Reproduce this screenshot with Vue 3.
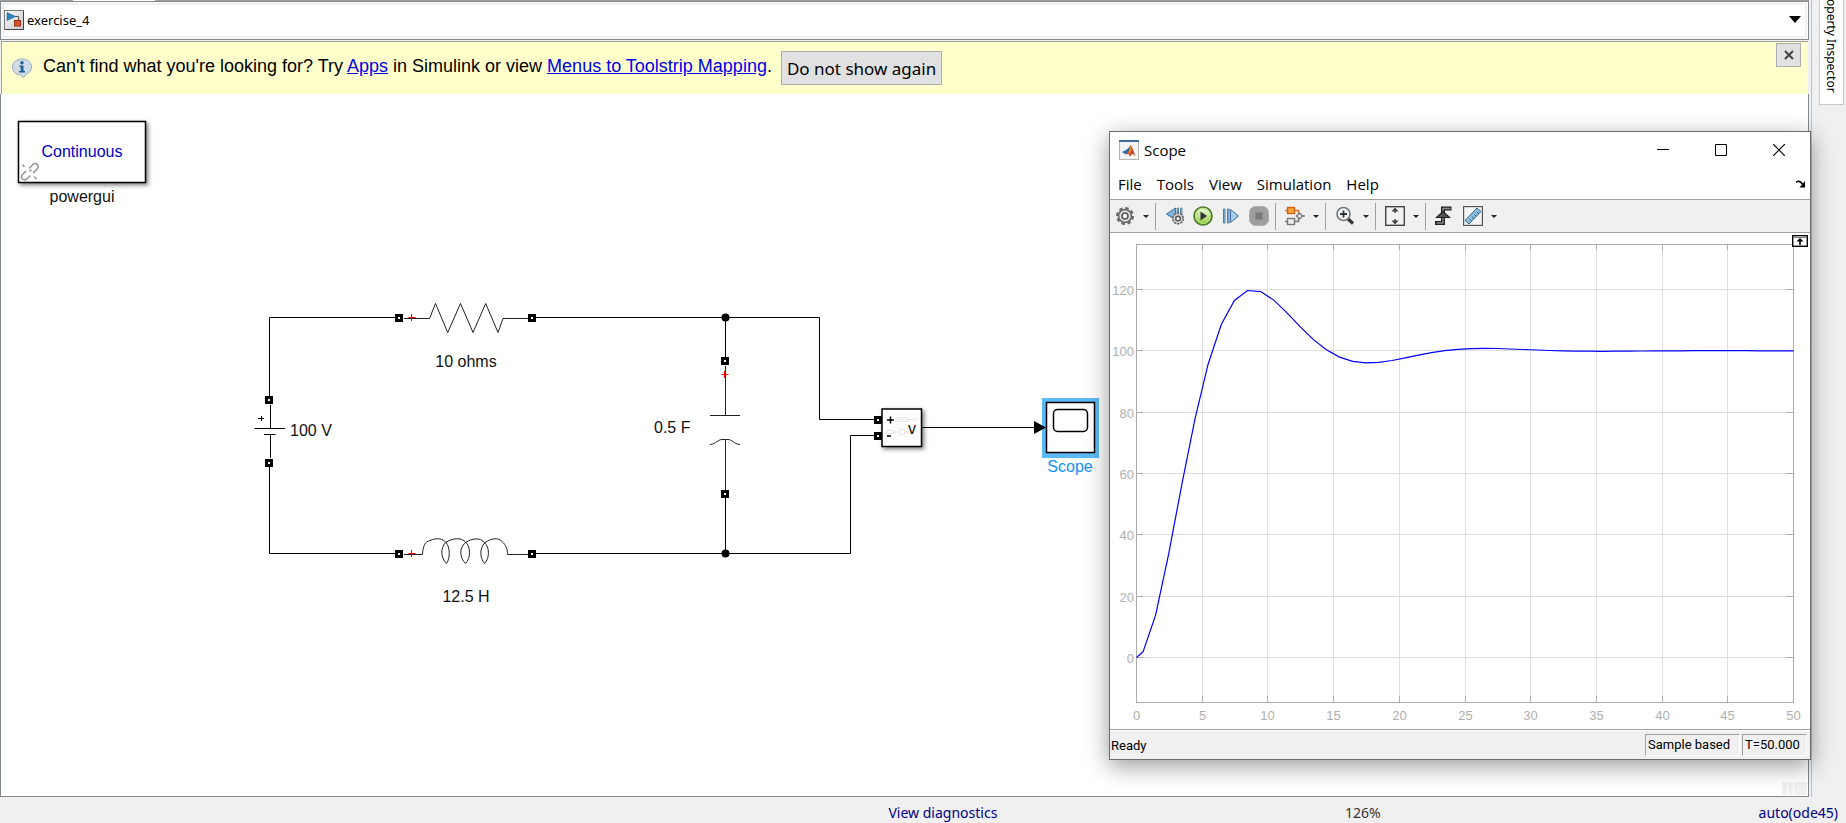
<script setup>
const menus = ['File', 'Tools', 'View', 'Simulation', 'Help']

const ports = [
  [399, 318], [532, 318], [399, 554], [532, 554],
  [269, 400], [269, 463], [725, 361], [725, 494],
  [878, 420], [878, 436]
]

const plot = { left: 26, right: 683, top: 11, bottom: 469, zero: 424, unitX: 13.14, unitY: 3.067 }
const px = (t) => plot.left + 0.5 + t * plot.unitX
const py = (v) => plot.zero + 0.5 - v * plot.unitY

const xTicks = Array.from({ length: 11 }, (_, i) => i * 5).map((t) => ({
  label: t,
  x: Math.floor(px(t)) + 0.5
}))
const yTicks = [0, 20, 40, 60, 80, 100, 120].map((v) => ({
  label: v,
  y: Math.floor(py(v)) + 0.5
}))

// Step response of a second-order circuit driven by a 100 V source.
const alpha = 0.183
const omega = 0.356
const response = (t) =>
  100 * (1 - Math.exp(-alpha * t) * (Math.cos(omega * t) + (alpha / omega) * Math.sin(omega * t)))
const times = [0, 0.5]
for (let t = 1.45; t < 50; t += 1) times.push(t)
times.push(50)
const curve = times.map((t) => `${px(t).toFixed(1)},${py(response(t)).toFixed(1)}`).join(' ')
</script>

<template>
  <div class="app">
    <div class="workspace">
      <main class="editor">
        <div class="strip"><span class="strip-tab"></span></div>
        <div class="address">
          <svg class="model-icon" width="20" height="20" viewBox="0 0 20 20" aria-hidden="true">
            <defs>
              <linearGradient id="modelBg" x1="0" y1="0" x2="1" y2="1">
                <stop offset="0" stop-color="#fff" /><stop offset="1" stop-color="#c4c4c4" />
              </linearGradient>
            </defs>
            <rect x=".5" y=".5" width="19" height="19" fill="url(#modelBg)" stroke="#777" />
            <path d="M19.5 1v18.5H1" fill="none" stroke="#444" />
            <path d="M3 2.500l8.500 4-8.500 4z" fill="#2f86bd" stroke="#1d5f8c" stroke-width=".6" />
            <path d="M11 6.500h3.500v4" fill="none" stroke="#555" />
            <rect x="10.500" y="10.500" width="6" height="5.500" fill="#d9532c" stroke="#9c2c12" />
          </svg>
          <span class="path">exercise_4</span>
          <button class="path-menu" aria-label="Show model path">
            <svg width="12" height="7" viewBox="0 0 12 7"><path d="M0 0h12L6 7z" fill="#000" /></svg>
          </button>
        </div>
        <div class="banner">
          <svg class="info" width="22" height="20" viewBox="0 0 22 20" aria-hidden="true">
            <path d="M11 1c5.500 0 9.500 3.200 9.500 8 0 3.400-2 6-5 7.200L12.500 19.500 9.500 17C4.500 16.600 1.500 13.500 1.500 9 1.500 4.200 5.500 1 11 1z" fill="#cfdbe6" stroke="#9aabba" />
            <circle cx="11" cy="4.700" r="1.700" fill="#1f5f94" />
            <path d="M8.500 7.500h4v5.500h1.500v1.500H8v-1.500h1.700V9H8.500z" fill="#1f5f94" />
          </svg>
          <p>
            Can't find what you're looking for? Try <a href="#apps">Apps</a> in Simulink or view
            <a href="#mapping">Menus to Toolstrip Mapping</a>.
          </p>
          <button class="dismiss">Do not show again</button>
          <button class="banner-close" aria-label="Close message">
            <svg width="10" height="10" viewBox="0 0 10 10"><path d="M1 1l8 8M9 1L1 9" stroke="#444" stroke-width="2" /></svg>
          </button>
        </div>

        <div class="canvas">
          <svg class="circuit" width="1109" height="700" viewBox="1 94 1109 700" role="img" aria-label="Circuit model">
            <!-- powergui block -->
            <rect class="block shadow" x="18.500" y="121.500" width="127" height="61" />
            <text class="blue" x="82" y="157" text-anchor="middle">Continuous</text>
            <text x="82" y="202" text-anchor="middle">powergui</text>
            <g fill="none" stroke="#999" stroke-width="1.600">
              <path d="M29 168.500l4-4c1.800-1.300 3.300-1.300 4.300 0s1 3 0 4.300l-4.300 4.300" />
              <path d="M26 171l-3.500 3.500c-1.300 1.800-1.300 3.300 0 4.500s2.700 1.200 4.300 0l3.700-3.500" />
              <path d="M22.500 164.500l2 2.500M34 176.500l2.500 2.500M31.500 169.500l-2 2" />
            </g>

            <!-- wires -->
            <g class="wire">
              <path d="M269.500 400V317.500H399M269.500 463V553.500H399" />
              <path d="M532 317.500H819.500V419.500H878M532 553.500H850.500V435.500H878" />
              <path d="M725.500 317.500V361M725.500 494V553.500" />
              <path d="M922 427.500H1036" />
            </g>
            <circle cx="725.500" cy="317.500" r="4" />
            <circle cx="725.500" cy="553.500" r="4" />

            <!-- source -->
            <g class="wire">
              <path d="M270.500 405V428.500M254.500 428.500H285M264 434.500H275.500M270.500 434.500V458" />
              <path d="M258 418.500h6M261.500 416v5" />
            </g>
            <text x="290" y="436">100 V</text>

            <!-- resistor -->
            <path class="part" d="M404 318.500H429.500L435.500 303.500 447.700 332.500 460.500 303.500 473 332.500 485.700 303.500 498 332.500 503 318.500H528" />
            <text x="466" y="367" text-anchor="middle">10 ohms</text>

            <!-- inductor -->
            <path
              class="part"
              d="M404 554.500H422.500C423 546 425 541.500 430 540.500 437 537.500 443 538.500 446 542.500 450 547 450.500 558 446.500 563.500 441 558 440 549 445.500 542.500 452 538.500 461 536.500 466 542.500 470.500 547 471 558 465.500 563.500 460 558 458.500 549 465.500 542.500 472 538.500 480 537 484.500 542.500 489.500 547 490 558 484.500 563.500 480 558 479 549 485 542.500 491 538.500 498 537 502 541.500 506 545 507.500 549 507.500 554.500H528"
            />
            <text x="466" y="602" text-anchor="middle">12.5 H</text>

            <!-- capacitor -->
            <path class="part" d="M725.500 366V416M710 415.500H740M710 444.500C716 444 718 439.500 722 439.500H728C732 439.500 734 444 740 444.500M725.500 439.500V490" />
            <text x="654" y="433">0.5 F</text>

            <g stroke="#f00">
              <path d="M408.500 317.500h7M411.500 314v7M408.500 553.500h7M411.500 550v7M721.500 374.500h7M724.500 371v7" />
            </g>

            <!-- voltage measurement -->
            <rect class="block shadow" x="882" y="409" width="39.500" height="37.500" />
            <g fill="none" stroke="#e6e6e6">
              <path d="M895 419.500h13M908 419.500h6" />
              <rect x="896" y="417.500" width="12" height="4" />
              <circle cx="916" cy="419.500" r="1.500" />
              <path d="M886.500 430.500h7v3h-7zM893 432h6M899.500 429.500h5v5h-5zM905 432h10" />
            </g>
            <path class="sign" d="M887 420h7M890.500 416.500v7M887 436h4" />
            <text x="908" y="434">v</text>

            <!-- scope block -->
            <rect x="1042" y="398" width="57" height="60" fill="#5cbaf7" />
            <rect class="block" x="1046.500" y="402.500" width="48" height="50" />
            <path d="M1034 421l12 6.500-12 6.500z" />
            <rect x="1053.500" y="409.500" width="34" height="22" rx="4" fill="none" stroke="#000" stroke-width="1.500" />
            <text class="selected" x="1070" y="472" text-anchor="middle">Scope</text>

            <g v-for="([x, y], i) in ports" :key="i">
              <rect :x="x - 4" :y="y - 4" width="8" height="8" />
              <rect :x="x - 1" :y="y - 1" width="2" height="2" fill="#fff" />
            </g>
          </svg>
          <div class="grip"><i></i><i></i><i></i></div>
        </div>
      </main>
      <aside class="side">
        <button class="side-tab" aria-label="Property Inspector">operty Inspector</button>
      </aside>
    </div>

    <footer class="status">
      <a class="diagnostics" href="#diagnostics">View diagnostics</a>
      <span>126%</span>
      <a href="#solver">auto(ode45)</a>
    </footer>

    <section class="scope" aria-label="Scope window">
      <header class="title">
        <svg width="20" height="20" viewBox="0 0 20 20" aria-hidden="true">
          <rect x=".5" y=".5" width="19" height="19" fill="#f4f4f4" stroke="#b5b5b5" />
          <rect width="20" height="2" fill="#3c6e9e" />
          <path d="M3 12l4-2 3.500-3 1.500-2-1 6-4 3.500z" fill="#2d6fae" />
          <path d="M7 14l3-3.500 2-5.500 1.700 4 2.800 7-3.200-2.500-2.300 3-1.500-2.500z" fill="#c8401c" />
          <path d="M12 5l.5 5-1.800 4-1.200-1z" fill="#f0962c" />
        </svg>
        <h1>Scope</h1>
        <button aria-label="Minimize"><svg width="12" height="12" viewBox="0 0 12 12"><path d="M0 5.500h12" stroke="#000" /></svg></button>
        <button aria-label="Maximize"><svg width="12" height="12" viewBox="0 0 12 12"><path d="M.5.5h11v11H.5z" fill="none" stroke="#000" /></svg></button>
        <button aria-label="Close"><svg width="12" height="12" viewBox="0 0 12 12"><path d="M0 0l12 12M12 0L0 12" stroke="#000" stroke-width="1.200" /></svg></button>
      </header>

      <nav class="menu">
        <button v-for="m in menus" :key="m">{{ m }}</button>
        <button class="undock" aria-label="Dock window">
          <svg width="10" height="8" viewBox="0 0 10 8"><path d="M0 2.500C2 .5 4 1 6.500 4" fill="none" stroke="#000" stroke-width="1.600" /><path d="M9 1v6.500H3.500z" /></svg>
        </button>
      </nav>

      <div class="toolbar">
        <button class="tool" aria-label="Configuration properties">
          <svg width="20" height="20" viewBox="0 0 20 20">
            <circle cx="10" cy="10" r="8" fill="none" stroke="#666" stroke-width="2" stroke-dasharray="3.600 2.680" />
            <circle cx="10" cy="10" r="6.500" fill="#ddd" stroke="#666" stroke-width="1.600" />
            <circle cx="10" cy="10" r="3" fill="#f4f4f4" stroke="#555" stroke-width="1.600" />
          </svg>
        </button>
        <button class="caret" aria-label="Configuration menu"><i></i></button>
        <span class="sep"></span>
        <button class="tool" aria-label="Step back options">
          <svg width="20" height="20" viewBox="0 0 20 20">
            <path d="M1.500 8L10.500 2v12z" fill="#7fb3dc" stroke="#3f6f99" />
            <path d="M12 2h1.500v8H12zM15.500 2H17v8h-1.500z" fill="#7fb3dc" stroke="#4b7ca6" stroke-width=".8" />
            <circle cx="13" cy="12.500" r="5.300" fill="#ccc" stroke="#666" stroke-width="1.500" stroke-dasharray="2.400 .9" />
            <circle cx="13" cy="12.500" r="2.300" fill="#f0f0f0" stroke="#555" stroke-width="1.400" />
          </svg>
        </button>
        <button class="tool" aria-label="Run">
          <svg width="20" height="20" viewBox="0 0 20 20">
            <defs>
              <linearGradient id="runBg" x1="0" y1="0" x2="0" y2="1">
                <stop offset="0" stop-color="#f4fbe6" /><stop offset="1" stop-color="#8fcb3c" />
              </linearGradient>
            </defs>
            <circle cx="10" cy="10" r="9" fill="url(#runBg)" stroke="#4a7a25" stroke-width="1.600" />
            <circle cx="10" cy="10" r="7.500" fill="none" stroke="#b4dc6d" />
            <path d="M7.500 5.500l6.500 4.500-6.500 4.500z" fill="#333" />
          </svg>
        </button>
        <button class="tool" aria-label="Step forward">
          <svg width="20" height="20" viewBox="0 0 20 20">
            <path d="M2.500 3h1.500v14H2.500zM6.500 3H8v14H6.500z" fill="#9fc6e6" stroke="#4b7ca6" />
            <path d="M9.500 3.500L17.500 10l-8 6.500z" fill="#a9cdea" stroke="#3f6f99" />
          </svg>
        </button>
        <button class="tool" aria-label="Stop" disabled>
          <svg width="20" height="20" viewBox="0 0 20 20">
            <rect x=".5" y=".5" width="19" height="19" rx="6" fill="#9e9e9e" stroke="#adadad" />
            <rect x="6.500" y="6.500" width="7" height="7" fill="#787878" />
          </svg>
        </button>
        <span class="sep"></span>
        <button class="tool" aria-label="Signal selector">
          <svg width="20" height="20" viewBox="0 0 20 20">
            <path d="M0 4.500h13.500v4" fill="none" stroke="#d9752c" stroke-width="1.400" />
            <path d="M0 15.500h13.500v-3M17 10h3" fill="none" stroke="#777" stroke-width="1.400" />
            <rect x="2.500" y="1.500" width="7" height="6" fill="#f7a53c" stroke="#d2601a" stroke-width="1.400" />
            <rect x="2.500" y="12.500" width="7" height="6" fill="#eee" stroke="#777" stroke-width="1.400" />
            <path d="M14.500 7l3 3-3 3-3-3z" fill="#eee" stroke="#777" stroke-width="1.400" />
          </svg>
        </button>
        <button class="caret" aria-label="Signal menu"><i></i></button>
        <span class="sep"></span>
        <button class="tool" aria-label="Zoom in">
          <svg width="20" height="20" viewBox="0 0 20 20">
            <path d="M12.500 12.500l5.500 5" stroke="#333" stroke-width="3.200" />
            <circle cx="8.500" cy="8" r="6.500" fill="#eef3f6" stroke="#777" stroke-width="1.600" />
            <path d="M5 8h7M8.500 4.500v7" stroke="#333" stroke-width="1.800" />
          </svg>
        </button>
        <button class="caret" aria-label="Zoom menu"><i></i></button>
        <span class="sep"></span>
        <button class="tool" aria-label="Scale axes">
          <svg width="20" height="20" viewBox="0 0 20 20">
            <rect x=".7" y=".7" width="18.600" height="18.600" fill="#f2f2f2" stroke="#444" stroke-width="1.400" />
            <path d="M10 1.500l3.500 4h-7zM10 18.500l3.500-4h-7z" fill="#444" />
            <path d="M10 5v2M10 13v2" stroke="#444" stroke-width="1.500" />
          </svg>
        </button>
        <button class="caret" aria-label="Scale menu"><i></i></button>
        <span class="sep"></span>
        <button class="tool" aria-label="Triggers">
          <svg width="20" height="20" viewBox="0 0 20 20">
            <path d="M0 17h8V2.500h8.500" fill="none" stroke="#222" stroke-width="4" />
            <path d="M1.500 17H8V2.500h7.500" fill="none" stroke="#8a8a8a" stroke-width="1.400" />
            <path d="M8 5.500l6.500 6H1.500z" fill="#555" stroke="#222" stroke-width="1.200" />
          </svg>
        </button>
        <button class="tool" aria-label="Cursor measurements">
          <svg width="20" height="20" viewBox="0 0 20 20">
            <rect x=".6" y=".6" width="18.800" height="18.800" fill="#f6f6f6" stroke="#555" stroke-width="1.200" />
            <path d="M2 14.500L14 2l4 3.500L6 18z" fill="#8dbedf" stroke="#33698f" />
            <path d="M8.500 15l-1.800-1.600M11 12.500l-1.800-1.600M13.300 10l-1.800-1.600M15.600 7.500l-1.800-1.600" stroke="#24506f" />
          </svg>
        </button>
        <button class="caret" aria-label="Measurements menu"><i></i></button>
      </div>

      <div class="plot">
        <svg width="100%" viewBox="0 0 700 496" role="img" aria-label="Capacitor voltage over time">
          <g stroke="#dedede">
            <line v-for="t in xTicks" :key="t.label" :x1="t.x" :x2="t.x" y1="11" y2="469" />
            <line v-for="t in yTicks" :key="t.label" x1="26" x2="683" :y1="t.y" :y2="t.y" />
          </g>
          <g stroke="#ababab">
            <rect x="26.500" y="11.500" width="657" height="458" fill="none" />
            <path v-for="t in xTicks" :key="t.label" :d="`M${t.x} 11v6M${t.x} 469v-6`" />
            <path v-for="t in yTicks" :key="t.label" :d="`M26 ${t.y}h7M683 ${t.y}h-7`" />
          </g>
          <text v-for="t in xTicks" :key="t.label" :x="t.x" y="487" text-anchor="middle">{{ t.label }}</text>
          <text v-for="t in yTicks" :key="t.label" x="24" :y="t.y + 5" text-anchor="end">{{ t.label }}</text>
          <polyline :points="curve" fill="none" stroke="#00f" stroke-width="1.200" />
        </svg>
        <button class="expand" aria-label="Maximize axes">
          <svg width="16" height="12" viewBox="0 0 16 12">
            <rect x=".7" y=".7" width="14.600" height="10.600" fill="#fff" stroke="#000" stroke-width="1.400" />
            <path d="M1 2.500h14" stroke="#888" />
            <path d="M8 3l3.500 3.500h-7z" /><path d="M8 5.500V10" stroke="#000" stroke-width="1.600" />
          </svg>
        </button>
      </div>

      <footer class="scope-status">
        <span class="ready">Ready</span>
        <span class="cell">Sample based</span>
        <span class="cell time">T=50.000</span>
      </footer>
    </section>
  </div>
</template>

<style>
html, body { margin: 0; }
</style>

<style scoped>
* { box-sizing: border-box; }
.app {
  position: relative;
  display: flex;
  flex-direction: column;
  min-height: 100vh;
  overflow: hidden;
  background: #f0f0f0;
  color: #000;
  font-family: "Open Sans", "Noto Sans", sans-serif;
}
button {
  padding: 0;
  border: 0;
  background: none;
  color: inherit;
  font: inherit;
}
svg { display: block; }
.workspace { flex: 1; display: flex; }
.editor {
  flex: 1;
  min-width: 0;
  display: flex;
  flex-direction: column;
}
.strip { height: 1px; background: #a0a0a0; }
.strip-tab { display: block; width: 82px; height: 1px; margin-left: 73px; background: #fff; }
.address {
  display: flex;
  align-items: center;
  height: 39px;
  padding: 0 7px 2px 3px;
  background: #fff;
  border: 1px solid #828790;
  box-shadow: inset 0 0 0 1px #fff, inset 0 0 0 3px #f0f0f0;
}
.path { margin-left: 3px; font: 13px "Noto Sans", sans-serif; }
.path-menu { margin-left: auto; }
.banner {
  display: flex;
  align-items: center;
  height: 53px;
  margin: 1px 1px 0;
  padding-left: 9px;
  background: #ffffcc;
  border-top: 1px solid #a0a0a0;
  border-left: 1px solid #a0a0a0;
  font: 18px "Liberation Sans", Arial, sans-serif;
}
.banner p { margin: 0 0 0 10px; padding-bottom: 3px; }
.banner a { color: #0000ee; }
.dismiss {
  height: 34px;
  margin-left: 9px;
  padding: 0 5px;
  background: #e1e1e1;
  border: 1px solid #adadad;
  font: 17px "Noto Sans", sans-serif;
}
.banner-close {
  display: grid;
  place-items: center;
  align-self: flex-start;
  width: 25px;
  height: 24px;
  margin: 1px 7px 0 auto;
  background: #e1e1e1;
  border: 1px solid #adadad;
}
.canvas {
  flex: 1;
  position: relative;
  background: #fff;
  border: 1px solid #828790;
  border-top: 0;
}
.circuit text { font: 16px "Liberation Sans", Arial, sans-serif; fill: #111; }
.circuit .blue { fill: #0000c8; }
.circuit .selected { fill: #1090f5; }
.wire, .part { fill: none; stroke: #000; }
.part { stroke: #222; }
.sign { stroke: #000; stroke-width: 1.5px; fill: none; }
.block { fill: #fff; stroke: #000; stroke-width: 1.5px; }
.shadow { filter: drop-shadow(2px 2px 2px rgba(0, 0, 0, .5)); }
.grip {
  position: absolute;
  right: 1px;
  bottom: 1px;
  display: flex;
  gap: 1px;
}
.grip i { width: 5px; height: 13px; background: #f0f0f0; }
.grip i:last-child { width: 13px; }
.side {
  display: flex;
  flex: none;
  align-items: flex-start;
  justify-content: flex-end;
  width: 35px;
  margin-left: 2px;
  padding-right: 2px;
  border-left: 1px solid #c0c0c0;
}
.side-tab {
  display: flex;
  align-items: center;
  justify-content: flex-end;
  width: 25px;
  height: 105px;
  padding-bottom: 11px;
  background: #fff;
  border: 1px solid #c8c8c8;
  border-top: 0;
  writing-mode: vertical-rl;
  white-space: nowrap;
  font: 12px "Noto Sans", sans-serif;
}
.status {
  display: grid;
  grid-template-columns: 48% 25% 1fr auto;
  align-items: center;
  height: 26px;
  padding: 4px 8px 0 12px;
  font: 14px "Noto Sans", sans-serif;
  color: #333;
}
.status a { color: #00008b; text-decoration: none; }
.diagnostics { grid-column: 2; }

.scope {
  position: absolute;
  top: 131px;
  right: 35px;
  width: 702px;
  background: #fff;
  border: 1px solid #6b6b6b;
  box-shadow: 0 6px 22px rgba(0, 0, 0, .4);
}
.title { display: flex; align-items: center; height: 36px; padding: 0 2px 0 9px; }
.title h1 { flex: 1; margin: 0 0 0 5px; font-size: 15px; font-weight: 400; }
.title button { display: grid; place-items: center; width: 58px; height: 36px; }
.menu {
  display: flex;
  align-items: center;
  gap: 15px;
  height: 32px;
  padding: 0 4px 0 8px;
  border-bottom: 1px solid #a0a0a0;
  font-size: 15px;
}
.undock { margin-left: auto; }
.toolbar {
  display: flex;
  align-items: center;
  height: 33px;
  padding-left: 1px;
  background: #f0f0f0;
  border-bottom: 1px solid #a0a0a0;
}
.tool { display: grid; place-items: center; width: 28px; height: 28px; }
.caret { display: grid; place-items: center; width: 14px; height: 28px; }
.caret i { border: 3px solid transparent; border-top-color: #222; border-bottom: 0; }
.sep { width: 1px; height: 27px; margin: 0 5px 0 2px; background: #a0a0a0; }
.plot { position: relative; }
.plot text { font: 13px "Liberation Sans", Arial, sans-serif; fill: #afafaf; }
.expand { position: absolute; top: 2px; right: 2px; }
.scope-status {
  display: flex;
  align-items: center;
  height: 30px;
  padding: 1px 3px 0 1px;
  gap: 2px;
  background: #f0f0f0;
  border-top: 1px solid #a0a0a0;
  box-shadow: inset 0 1px #fff;
  font: 13px Roboto, "Liberation Sans", sans-serif;
}
.ready { flex: 1; }
.cell {
  height: 22px;
  width: 95px;
  padding-left: 2px;
  line-height: 20px;
  border: 1px solid #fff;
  border-top-color: #a0a0a0;
  border-left-color: #a0a0a0;
}
.time { width: 65px; }
</style>
